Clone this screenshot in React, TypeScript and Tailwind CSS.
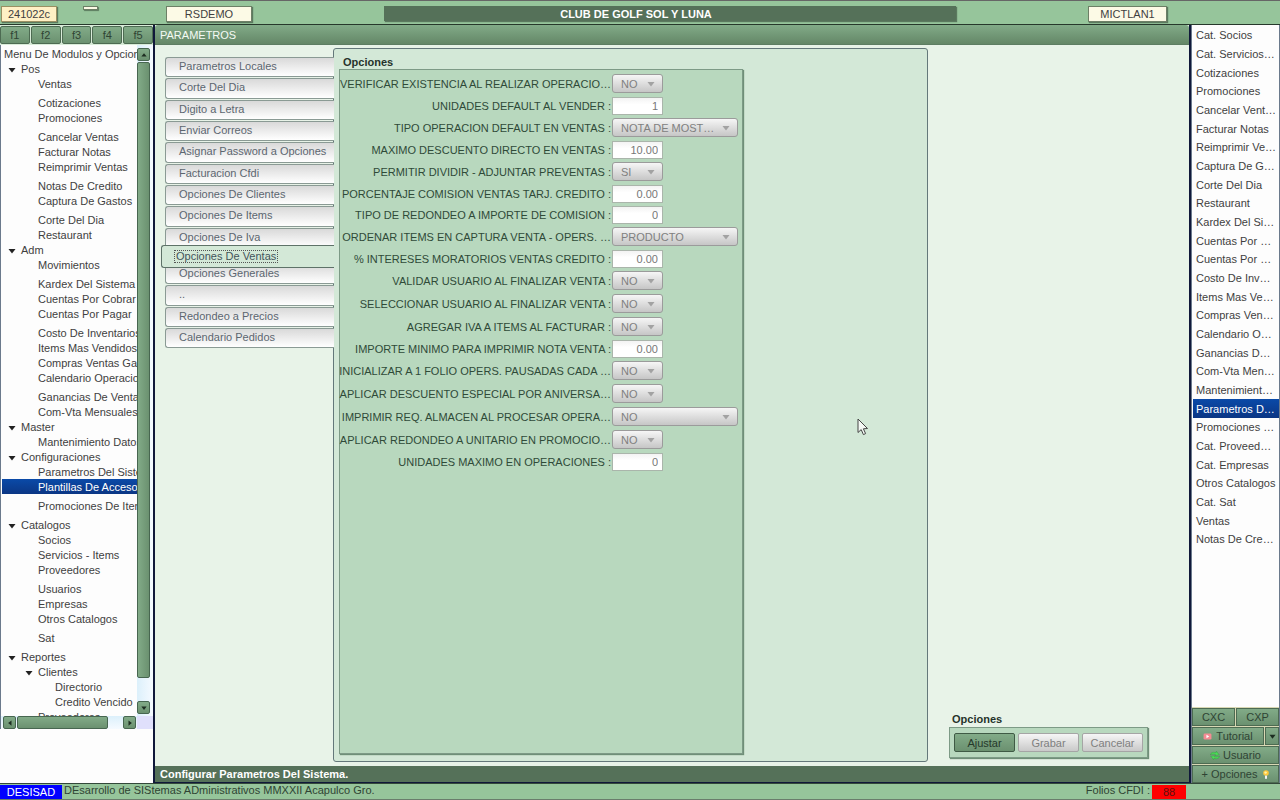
import React, { useState } from "react";

type TreeRow = { text: string; level: number; open?: boolean; gap?: boolean };

const tree: TreeRow[] = [
  { text: "Pos", level: 1, open: true },
  { text: "Ventas", level: 2 },
  { text: "Cotizaciones", level: 2, gap: true },
  { text: "Promociones", level: 2 },
  { text: "Cancelar Ventas", level: 2, gap: true },
  { text: "Facturar Notas", level: 2 },
  { text: "Reimprimir Ventas", level: 2 },
  { text: "Notas De Credito", level: 2, gap: true },
  { text: "Captura De Gastos", level: 2 },
  { text: "Corte Del Dia", level: 2, gap: true },
  { text: "Restaurant", level: 2 },
  { text: "Adm", level: 1, open: true },
  { text: "Movimientos", level: 2 },
  { text: "Kardex Del Sistema", level: 2, gap: true },
  { text: "Cuentas Por Cobrar", level: 2 },
  { text: "Cuentas Por Pagar", level: 2 },
  { text: "Costo De Inventarios", level: 2, gap: true },
  { text: "Items Mas Vendidos", level: 2 },
  { text: "Compras Ventas Gastos", level: 2 },
  { text: "Calendario Operaciones", level: 2 },
  { text: "Ganancias De Ventas", level: 2, gap: true },
  { text: "Com-Vta Mensuales", level: 2 },
  { text: "Master", level: 1, open: true },
  { text: "Mantenimiento Datos", level: 2 },
  { text: "Configuraciones", level: 1, open: true },
  { text: "Parametros Del Sistema", level: 2 },
  { text: "Plantillas De Accesos", level: 2 },
  { text: "Promociones De Items", level: 2, gap: true },
  { text: "Catalogos", level: 1, open: true, gap: true },
  { text: "Socios", level: 2 },
  { text: "Servicios - Items", level: 2 },
  { text: "Proveedores", level: 2 },
  { text: "Usuarios", level: 2, gap: true },
  { text: "Empresas", level: 2 },
  { text: "Otros Catalogos", level: 2 },
  { text: "Sat", level: 2, gap: true },
  { text: "Reportes", level: 1, open: true, gap: true },
  { text: "Clientes", level: 2, open: true },
  { text: "Directorio", level: 3 },
  { text: "Credito Vencido", level: 3 },
  { text: "Proveedores", level: 2, open: true },
];

const shortcuts = [
  "Cat. Socios", "Cat. Servicios…", "Cotizaciones", "Promociones", "Cancelar Vent…",
  "Facturar Notas", "Reimprimir Ve…", "Captura De G…", "Corte Del Dia", "Restaurant",
  "Kardex Del Si…", "Cuentas Por …", "Cuentas Por …", "Costo De Inv…", "Items Mas Ve…",
  "Compras Ven…", "Calendario O…", "Ganancias D…", "Com-Vta Men…", "Mantenimient…",
  "Parametros D…", "Promociones …", "Cat. Proveed…", "Cat. Empresas", "Otros Catalogos",
  "Cat. Sat", "Ventas", "Notas De Cre…",
];

const tabsBefore = [
  "Parametros Locales", "Corte Del Dia", "Digito a Letra", "Enviar Correos",
  "Asignar Password a Opciones", "Facturacion Cfdi", "Opciones De Clientes",
  "Opciones De Items", "Opciones De Iva",
];
const tabsAfter = ["Opciones Generales", "..", "Redondeo a Precios", "Calendario Pedidos"];

type Field = { label: string; value: string; kind: "select" | "wide" | "input" };

const fields: Field[] = [
  { label: "VERIFICAR EXISTENCIA AL REALIZAR OPERACIO…", value: "NO", kind: "select" },
  { label: "UNIDADES DEFAULT AL VENDER :", value: "1", kind: "input" },
  { label: "TIPO OPERACION DEFAULT EN VENTAS :", value: "NOTA DE MOST…", kind: "wide" },
  { label: "MAXIMO DESCUENTO DIRECTO EN VENTAS :", value: "10.00", kind: "input" },
  { label: "PERMITIR DIVIDIR - ADJUNTAR PREVENTAS :", value: "SI", kind: "select" },
  { label: "PORCENTAJE COMISION VENTAS TARJ. CREDITO :", value: "0.00", kind: "input" },
  { label: "TIPO DE REDONDEO A IMPORTE DE COMISION :", value: "0", kind: "input" },
  { label: "ORDENAR ITEMS EN CAPTURA VENTA - OPERS. …", value: "PRODUCTO", kind: "wide" },
  { label: "% INTERESES MORATORIOS VENTAS CREDITO :", value: "0.00", kind: "input" },
  { label: "VALIDAR USUARIO AL FINALIZAR VENTA :", value: "NO", kind: "select" },
  { label: "SELECCIONAR USUARIO AL FINALIZAR VENTA :", value: "NO", kind: "select" },
  { label: "AGREGAR IVA A ITEMS AL FACTURAR :", value: "NO", kind: "select" },
  { label: "IMPORTE MINIMO PARA IMPRIMIR NOTA VENTA :", value: "0.00", kind: "input" },
  { label: "INICIALIZAR A 1 FOLIO OPERS. PAUSADAS CADA …", value: "NO", kind: "select" },
  { label: "APLICAR DESCUENTO ESPECIAL POR ANIVERSA…", value: "NO", kind: "select" },
  { label: "IMPRIMIR REQ. ALMACEN AL PROCESAR OPERA…", value: "NO", kind: "wide" },
  { label: "APLICAR REDONDEO A UNITARIO EN PROMOCIO…", value: "NO", kind: "select" },
  { label: "UNIDADES MAXIMO EN OPERACIONES :", value: "0", kind: "input" },
];

const greenButton =
  "flex items-center justify-center border border-[#4d6b52] bg-linear-to-b from-[#82ab88] to-[#6b9170] text-[#2f4434]";
const scrollButton =
  "flex size-[13px] shrink-0 items-center justify-center rounded-[2px] border border-[#476650] bg-linear-to-b from-[#82ab88] to-[#6b9170]";

function Triangle({ className, points }: { className: string; points: string }) {
  return (
    <svg viewBox="0 0 8 8" className={className} aria-hidden="true">
      <polygon points={points} fill="currentColor" />
    </svg>
  );
}
const DOWN = "0.5,2 7.5,2 4,6.5";
const UP = "0.5,6 7.5,6 4,1.5";
const LEFT = "6,0.5 6,7.5 1.5,4";
const RIGHT = "2,0.5 2,7.5 6.5,4";

function TopBar() {
  const chip = "flex h-[16px] items-center justify-center border border-[#6d7f66] bg-[#fcfae6] shadow-[1px_1px_1px_#5b7a5f]";
  return (
    <header className="flex h-[25px] shrink-0 items-start border-t border-b border-t-[#666] border-b-[#26382b] bg-[#96c59b] pt-[5px] pl-px">
      <span className="flex h-[16px] w-[56px] items-center justify-center border border-[#9a8f62] bg-[#fff0c5] shadow-[1px_1px_1px_#5b7a5f]">
        241022c
      </span>
      <span className="ml-[26px] h-[4px] w-[15px] border border-[#6d7f66] bg-[#fcfae6] shadow-[1px_1px_1px_#5b7a5f]" />
      <span className={`${chip} ml-[68px] w-[86px]`}>RSDEMO</span>
      <h1 className="ml-[132px] flex h-[15px] flex-1 items-center justify-center bg-[#557159] pr-[68px] font-bold text-white shadow-[1px_1px_1px_#5b7a5f]">
        CLUB DE GOLF SOL Y LUNA
      </h1>
      <span className={`${chip} mr-[113px] ml-[132px] w-[79px]`}>MICTLAN1</span>
    </header>
  );
}

function MenuTree() {
  const [selected, setSelected] = useState(26);
  return (
    <aside className="flex w-[153px] shrink-0 flex-col bg-[#fdfdfd]">
      <div className="flex h-[20px] gap-px bg-[#d9ecd9] py-px">
        {["f1", "f2", "f3", "f4", "f5"].map((f) => (
          <button key={f} className={`${greenButton} flex-1 rounded-[2px]`}>{f}</button>
        ))}
      </div>
      <div className="flex min-h-0 flex-1 border-l border-[#6b7a8c]">
        <nav className="min-w-0 flex-1 overflow-hidden pt-px pl-px">
          <ul className="whitespace-nowrap">
            <li className="h-[15px] pl-[2px] leading-[16px]">Menu De Modulos y Opciones</li>
            {tree.map((row, i) => (
              <li key={i} className={row.gap ? "mt-1" : ""}>
                <button
                  onClick={() => setSelected(i)}
                  className={`flex h-[15px] w-full items-center ${
                    row.level === 1 ? "pl-[6px]" : row.level === 2 ? "pl-[23px]" : "pl-[40px]"
                  } ${selected === i ? "bg-linear-to-b from-[#0a4aa8] to-[#0b3684] text-white" : ""}`}
                >
                  <span className="flex w-[13px] shrink-0">
                    {row.open && <Triangle className="mt-[3px] size-[8px] text-[#222]" points={DOWN} />}
                  </span>
                  {row.text}
                </button>
              </li>
            ))}
          </ul>
        </nav>
        <div className="flex w-[16px] flex-col gap-px bg-linear-to-r from-[#dcf0fb] to-[#f5faff] pt-[3px] pr-[3px] pb-[2px]">
          <button aria-label="Subir" className={scrollButton}>
            <Triangle className="size-[6px] text-[#1d2d21]" points={UP} />
          </button>
          <div className="flex-1">
            <div className="h-[96.5%] rounded-[2px] border border-[#476650] bg-linear-to-r from-[#82ab88] to-[#6b9170]" />
          </div>
          <button aria-label="Bajar" className={scrollButton}>
            <Triangle className="size-[6px] text-[#1d2d21]" points={DOWN} />
          </button>
        </div>
      </div>
      <div className="flex h-[13px] shrink-0 items-center border-l border-[#6b7a8c] bg-linear-to-b from-[#dcf0fb] to-[#f5faff]">
        <div className="flex flex-1 gap-px pl-[2px]">
          <button aria-label="Izquierda" className={scrollButton}>
            <Triangle className="size-[6px] text-[#1d2d21]" points={LEFT} />
          </button>
          <div className="flex-1">
            <div className="h-[13px] w-[87%] rounded-[2px] border border-[#476650] bg-linear-to-b from-[#82ab88] to-[#6b9170]" />
          </div>
          <button aria-label="Derecha" className={scrollButton}>
            <Triangle className="size-[6px] text-[#1d2d21]" points={RIGHT} />
          </button>
        </div>
        <div className="ml-px h-full w-[16px] bg-[#e0e0fc]" />
      </div>
      <div className="h-[54px] shrink-0 bg-[#fdfdfd]" />
    </aside>
  );
}

function TabButton({ text }: { text: string }) {
  return (
    <button
      role="tab"
      className="ml-[4px] mb-px flex flex-1 items-start rounded-l-[3px] border border-r-0 border-[#8a9a94] bg-linear-to-b from-[#d9d9d9] to-white pt-px pl-[13px] whitespace-nowrap text-[#5c6670]"
    >
      {text}
    </button>
  );
}

function FieldRow({ field, index }: { field: Field; index: number }) {
  const id = `campo-${index}`;
  return (
    <div className={`flex items-center ${field.kind === "input" ? "h-[21px]" : "h-[23px]"}`}>
      <label htmlFor={id} className="flex w-[271px] justify-end whitespace-nowrap text-[#2f4a38]">
        {field.label}
      </label>
      {field.kind === "input" ? (
        <input
          id={id}
          defaultValue={field.value}
          className="ml-px h-[18px] w-[51px] border border-[#aab5ab] bg-linear-to-b from-[#f3f3f3] to-white to-40% pt-px pr-[4px] text-right text-[#777]"
        />
      ) : (
        <span className={`relative ml-px flex h-[19px] ${field.kind === "wide" ? "w-[126px]" : "w-[51px]"}`}>
          <select
            id={id}
            className="w-full appearance-none rounded-[3px] border border-[#9b9b9b] bg-linear-to-b from-[#f6f6f6] to-[#c6c6c6] pl-[8px] text-[#808080]"
          >
            <option>{field.value}</option>
          </select>
          <Triangle className="pointer-events-none absolute top-[6px] right-[8px] size-[8px] text-[#a2a2a2]" points={DOWN} />
        </span>
      )}
    </div>
  );
}

function MainWindow() {
  const grayButton =
    "h-[19px] w-[61px] rounded-[2px] border border-[#a5a5a5] bg-linear-to-b from-[#f6f6f6] to-[#c9c9c9] text-[#808080]";
  return (
    <main className="relative flex min-w-0 flex-1 flex-col border-x-2 border-b border-[#10183a] bg-[#e8f3e8]">
      <h2 className="flex h-[20px] shrink-0 items-center rounded-t-[3px] border-b border-[#5d7d62] bg-linear-to-b from-[#82ab88] to-[#648767] pl-[5px] text-[#f4faf4]">
        PARAMETROS
      </h2>
      <div className="flex min-h-0 flex-1 pt-[3px] pb-[4px]">
        <div role="tablist" className="z-10 -mr-px flex w-[179px] shrink-0 flex-col pt-[9px] pl-[6px]">
          <div className="flex h-[192px] flex-col">
            {tabsBefore.map((t) => <TabButton key={t} text={t} />)}
          </div>
          <button
            role="tab"
            aria-selected="true"
            className="relative -my-[4px] flex h-[23px] items-center rounded-l-[3px] border border-r-0 border-[#5e7268] bg-[#d3e8d7] pl-[12px] text-[#43545a]"
          >
            <span className="border border-dotted border-[#555] px-px leading-[11px]">Opciones De Ventas</span>
          </button>
          <div className="flex h-[85px] flex-col">
            {tabsAfter.map((t) => <TabButton key={t} text={t} />)}
          </div>
        </div>
        <section className="flex min-w-0 flex-1 flex-col rounded-[3px] border border-[#64787a] bg-[#d3e8d7] px-[5px] py-[7px]">
          <h3 className="h-[13px] pl-[4px] leading-[13px] font-bold text-[#26332b]">Opciones</h3>
          <form className="w-[404px] flex-1 border border-[#7d9a86] bg-[#b8d8be] pt-[2px] shadow-[1px_1px_1px_#6f8f78]">
            {fields.map((f, i) => <FieldRow key={i} field={f} index={i} />)}
          </form>
        </section>
        <div className="flex w-[261px] shrink-0 flex-col items-start justify-end pb-[4px] pl-[21px]">
          <h3 className="h-[15px] pl-[3px] leading-[14px] font-bold text-[#26332b]">Opciones</h3>
          <div className="flex h-[31px] items-center gap-[3px] border border-[#7d9a86] bg-[#b8d8be] px-[4px] shadow-[1px_1px_1px_#6f8f78]">
            <button className="h-[19px] w-[61px] rounded-[2px] border border-[#3f5a45] bg-linear-to-b from-[#82ab88] to-[#6b9170] text-[#25382a]">
              Ajustar
            </button>
            <button className={grayButton}>Grabar</button>
            <button className={grayButton}>Cancelar</button>
          </div>
        </div>
      </div>
      <div className="flex h-[16px] shrink-0 items-center bg-[#557159] pl-[5px] font-bold text-white">
        Configurar Parametros Del Sistema.
      </div>
      <svg viewBox="0 0 12 18" className="pointer-events-none absolute top-[393px] left-[702px] h-[18px] w-[12px]" aria-hidden="true">
        <path d="M1 1 L1 14.5 L4.2 11.6 L6.4 16.6 L8.6 15.6 L6.4 10.8 L10.5 10.5 Z" fill="#f4f8f4" stroke="#444" strokeWidth="1" />
      </svg>
    </main>
  );
}

function ShortcutPanel() {
  const [selected, setSelected] = useState(20);
  return (
    <aside className="flex w-[89px] shrink-0 flex-col border-x border-[#6b7a8c] bg-[#fdfdfd]">
      <ul className="mt-px flex h-[523px] flex-col pl-px">
        {shortcuts.map((s, i) => (
          <li key={i} className="flex flex-1">
            <button
              onClick={() => setSelected(i)}
              className={`w-full overflow-hidden pl-[3px] text-left whitespace-nowrap ${
                selected === i ? "bg-linear-to-b from-[#0a4aa8] to-[#0b3684] text-white" : ""
              }`}
            >
              {s}
            </button>
          </li>
        ))}
      </ul>
      <div className="mt-auto flex flex-col gap-px bg-[#d8d8b4] pt-px">
        <div className="flex h-[18px] gap-px">
          <button className={`${greenButton} flex-1`}>CXC</button>
          <button className={`${greenButton} flex-1`}>CXP</button>
        </div>
        <div className="flex h-[18px] gap-px">
          <button className={`${greenButton} flex-1 gap-[4px]`}>
            <svg viewBox="0 0 10 8" className="h-[7px] w-[9px]" aria-hidden="true">
              <rect x="0.5" y="0.5" width="9" height="7" rx="1.5" fill="#f58b93" />
              <polygon points="3.8,2 3.8,6 7,4" fill="#fff" />
            </svg>
            Tutorial
          </button>
          <button aria-label="Mas tutoriales" className={`${greenButton} w-[14px]`}>
            <Triangle className="size-[7px] text-[#1d2d21]" points={DOWN} />
          </button>
        </div>
        <button className={`${greenButton} h-[18px] gap-[3px]`}>
          <svg viewBox="0 0 10 9" className="h-[9px] w-[10px]" aria-hidden="true">
            <path d="M0.4 4 C0.8 1.2 3.6 0.8 6 1.8 L6.4 0.2 L9.2 3.8 L5 4.6 L5.4 3.4 C3.6 2.8 2 3 0.4 4 Z" fill="#4ddc58" stroke="#2a9a3a" strokeWidth="0.4" />
            <path d="M9.6 5 C9.2 7.8 6.4 8.2 4 7.2 L3.6 8.8 L0.8 5.2 L5 4.8 L4.6 5.8 C6.4 6.2 8 6 9.6 5 Z" fill="#4ddc58" stroke="#2a9a3a" strokeWidth="0.4" />
          </svg>
          Usuario
        </button>
        <button className={`${greenButton} h-[18px] gap-[6px]`}>
          + Opciones
          <svg viewBox="0 0 6 9" className="h-[9px] w-[6px]" aria-hidden="true">
            <circle cx="3" cy="3" r="2.8" fill="#ffc83a" />
            <circle cx="2.6" cy="2.6" r="1.2" fill="#fff3b0" />
            <rect x="2" y="5.6" width="2" height="3.2" fill="#f3f3f3" />
          </svg>
        </button>
      </div>
    </aside>
  );
}

export default function App() {
  return (
    <div className="flex h-screen flex-col overflow-hidden bg-[#96c59b] font-['Liberation_Sans',Arial,sans-serif] text-[11px] leading-[14px] text-[#3f3f3f]">
      <TopBar />
      <div className="flex min-h-0 flex-1">
        <MenuTree />
        <MainWindow />
        <ShortcutPanel />
      </div>
      <footer className="flex h-[17px] shrink-0 items-start border-t border-b border-t-[#33483a] border-b-[#6a7d6c] bg-[#96c59b] text-[#2f4434]">
        <span className="flex h-[14px] w-[62px] items-center justify-center self-end bg-[#0000ff] text-white">DESISAD</span>
        <span className="ml-[2px] leading-[13px]">DEsarrollo de SIStemas ADministrativos MMXXII Acapulco Gro.</span>
        <span className="ml-auto leading-[13px]">Folios CFDI :</span>
        <span className="mr-[94px] ml-[2px] flex h-[14px] w-[34px] items-center justify-center self-end bg-[#ff0000] text-[#601010]">88</span>
      </footer>
    </div>
  );
}
